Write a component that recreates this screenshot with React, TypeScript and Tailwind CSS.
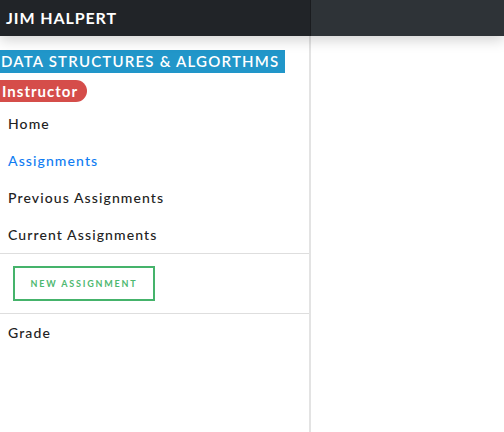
import React from 'react';

const navItems = [
  { label: 'Home', active: false },
  { label: 'Assignments', active: true },
  { label: 'Previous Assignments', active: false },
  { label: 'Current Assignments', active: false },
];

const App: React.FC = () => {
  return (
    <div className="h-[432px] w-[504px] overflow-hidden bg-white font-['Lato',sans-serif]">
      {/* top bar */}
      <header className="relative z-10 flex h-9 shadow-[0_4px_14px_rgba(0,0,0,0.18)]">
        <div className="flex w-[310px] items-center bg-[#212428] pl-[6px]">
          <span className="text-[16px] font-bold tracking-[0.9px] text-white">JIM HALPERT</span>
        </div>
        <div className="w-px bg-[#1a1c1f]" />
        <div className="flex-1 bg-[#2e3337]" />
      </header>

      <div className="flex h-[396px]">
        <aside className="flex w-[311px] flex-col border-r-2 border-[#e3e3e3]">
          <div className="mt-[14px] self-start bg-[#2196c9] py-[2px] pl-px pr-[6px] text-[15px] font-semibold leading-[19px] tracking-[1.2px] text-white">
            DATA STRUCTURES &amp; ALGORTHMS
          </div>
          <div className="mt-[7px] self-start rounded-r-full bg-[#d54d4a] py-[1px] pl-[2px] pr-[9px] text-[15px] font-bold leading-[20px] tracking-[1px] text-white">
            Instructor
          </div>

          <nav className="mt-[3px] flex flex-col">
            {navItems.map(item => (
              <a
                key={item.label}
                className={`flex h-[37px] items-center pl-2 text-[14px] font-medium tracking-[1.1px] ${
                  item.active ? 'text-[#0f7cf2]' : 'text-[#222]'
                }`}
              >
                {item.label}
              </a>
            ))}
          </nav>

          <div className="border-y border-[#dedede] py-3 pl-[13px]">
            <button className="flex h-[35px] w-[142px] items-center justify-center border-2 border-[#45b36b] text-[9px] font-bold tracking-[1.8px] text-[#4db870]">
              NEW ASSIGNMENT
            </button>
          </div>

          <a className="flex h-[37px] items-center pl-2 text-[14px] font-medium tracking-[1.1px] text-[#222]">
            Grade
          </a>
        </aside>
        <main className="flex-1" />
      </div>
    </div>
  );
};

export default App;
